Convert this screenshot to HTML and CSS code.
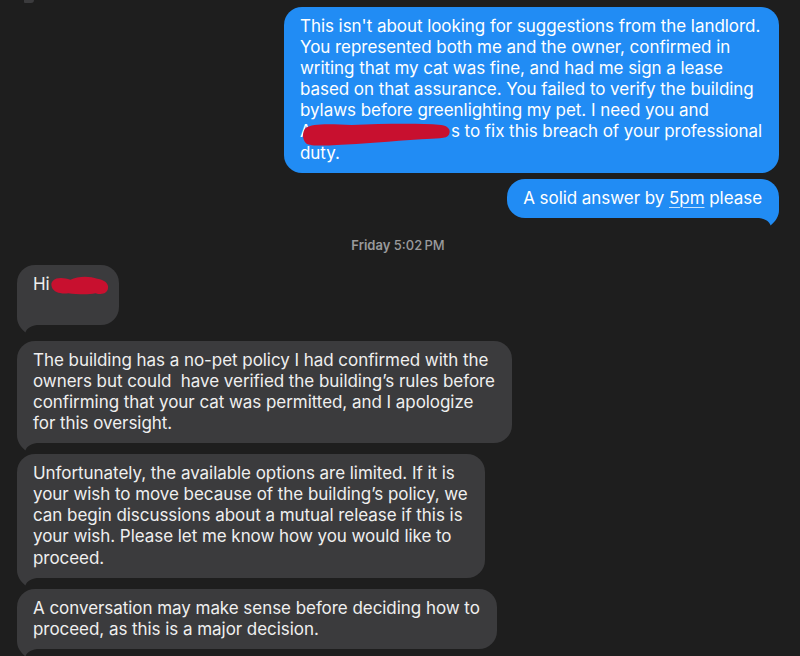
FILE: index.html
```html
<!DOCTYPE html>
<html lang="en">
<head>
<meta charset="utf-8">
<title>Messages</title>
<link rel="stylesheet" href="styles.css">
</head>
<body>
<div class="thread">
  <div class="prev-tail"></div>

  <div class="bubble out">
    <span class="txt">This isn't about looking for suggestions from the landlord.<br>
    You represented both me and the owner, confirmed in<br>
    writing that my cat was fine, and had me sign a lease<br>
    based on that assurance. You failed to verify the building<br>
    bylaws before greenlighting my pet. I need you and<br>
    <span class="redact redact-name">A<svg class="blob" viewBox="0 0 150 24" preserveAspectRatio="none"><path d="M4 5 C10 0 30 1 50 2 C80 1 115 0 140 2 C148 3 150 8 148 12 C146 17 135 16 120 17 C90 19 60 22 35 23 C20 24 8 24 4 21 C0 17 0 9 4 5 Z" fill="#c8102f"/></svg></span>s to fix this breach of your professional<br>
    duty.</span>
  </div>

  <div class="bubble out tail gap-s">
    <svg class="tail-svg right" viewBox="0 0 24 28"><path d="M24 2 L24 12 C24 18 21 23 15.5 27.5 C15 25 12 21 4 20 L0 20 L0 2 Z"/></svg>
    <span class="txt">A solid answer by <span class="ul">5pm</span> please</span>
  </div>

  <div class="stamp"><b>Friday</b> 5:02&#8201;PM</div>

  <div class="bubble in tail hi">
    <svg class="tail-svg left" viewBox="0 0 24 28"><path d="M24 2 L24 12 C24 18 21 23 15.5 27.5 C15 25 12 21 4 20 L0 20 L0 2 Z"/></svg>
    <span class="txt">Hi<span class="redact redact-hi"><span class="under">ss</span><svg class="blob" viewBox="0 0 60 22" preserveAspectRatio="none"><path d="M2 6 C6 2 14 3 20 5 C28 1 40 1 48 4 C55 5 60 9 59 14 C58 20 52 21 46 19 C38 21 26 20 18 19 C10 20 3 18 1 13 C0 10 0 8 2 6 Z" fill="#c8102f"/></svg></span></span>
  </div>

  <div class="bubble in tail gap-l">
    <svg class="tail-svg left" viewBox="0 0 24 28"><path d="M24 2 L24 12 C24 18 21 23 15.5 27.5 C15 25 12 21 4 20 L0 20 L0 2 Z"/></svg>
    <span class="txt">The building has a no-pet policy I had confirmed with the<br>
    owners but could&nbsp; have verified the building’s rules before<br>
    confirming that your cat was permitted, and I apologize<br>
    for this oversight.</span>
  </div>

  <div class="bubble in tail gap-m">
    <svg class="tail-svg left" viewBox="0 0 24 28"><path d="M24 2 L24 12 C24 18 21 23 15.5 27.5 C15 25 12 21 4 20 L0 20 L0 2 Z"/></svg>
    <span class="txt">Unfortunately, the available options are limited. If it is<br>
    your wish to move because of the building’s policy, we<br>
    can begin discussions about a mutual release if this is<br>
    your wish. Please let me know how you would like to<br>
    proceed.</span>
  </div>

  <div class="bubble in tail gap-m">
    <svg class="tail-svg left" viewBox="0 0 24 28"><path d="M24 2 L24 12 C24 18 21 23 15.5 27.5 C15 25 12 21 4 20 L0 20 L0 2 Z"/></svg>
    <span class="txt">A conversation may make sense before deciding how to<br>
    proceed, as this is a major decision.</span>
  </div>
</div>
</body>
</html>
```

FILE: styles.css
```css
* { box-sizing: border-box; }

html, body {
  margin: 0;
  padding: 0;
  background: #1e1e1e;
  height: 100%;
  overflow: hidden;
}

body {
  font-family: Inter, "Noto Sans", "Liberation Sans", sans-serif;
  font-size: 17px;
  color: #ffffff;
  -webkit-font-smoothing: antialiased;
}

.thread {
  position: relative;
  display: flex;
  flex-direction: column;
  padding: 7px 21px 0 17px;
}

.prev-tail {
  position: absolute;
  left: 24px;
  top: 0;
  width: 10px;
  height: 3px;
  background: #3b3b3d;
  border-radius: 0 0 6px 2px;
}

.bubble {
  position: relative;
  width: fit-content;
  padding: 9px 17px 9px 16px;
  line-height: 21.1px;
  border-radius: 18px;
  white-space: nowrap;
  letter-spacing: -0.05px;
}

.txt {
  position: relative;
}

.bubble.out {
  align-self: flex-end;
  background: #218cf4;
  color: #ffffff;
}

.bubble.in {
  align-self: flex-start;
  background: #3b3b3d;
  color: #efefef;
  padding-left: 16px;
}

.gap-s { margin-top: 6px; }
.gap-m { margin-top: 11px; }
.gap-l { margin-top: 16px; }

.tail-svg {
  position: absolute;
  bottom: -8px;
  width: 24px;
  height: 28px;
}
.tail-svg.right { right: 0; fill: #218cf4; }
.tail-svg.left { left: 0; fill: #3b3b3d; transform: scaleX(-1); }

.ul {
  text-decoration: underline;
  text-decoration-color: rgba(255,255,255,0.75);
  text-underline-offset: 3px;
  text-decoration-thickness: 1px;
}

.stamp {
  align-self: center;
  margin: 19px 0 12px 0;
  font-size: 13px;
  line-height: 16px;
  color: #9a9a9c;
  font-weight: 500;
  letter-spacing: 0;
}
.stamp b { font-weight: 600; }

.redact {
  position: relative;
  display: inline-block;
  vertical-align: top;
}

.redact-name {
  width: 151px;
}

.redact-hi {
  width: 59px;
  color: #efefef;
}
.redact-hi .under { padding-left: 14px; }

.blob {
  position: absolute;
  display: block;
}

.redact-name .blob {
  left: 2px;
  top: 2px;
  width: 149px;
  height: 23px;
}

.redact-hi .blob {
  left: 1px;
  top: 1px;
  width: 58px;
  height: 21px;
}

.hi {
  min-height: 60px;
  width: 102px;
}
```
